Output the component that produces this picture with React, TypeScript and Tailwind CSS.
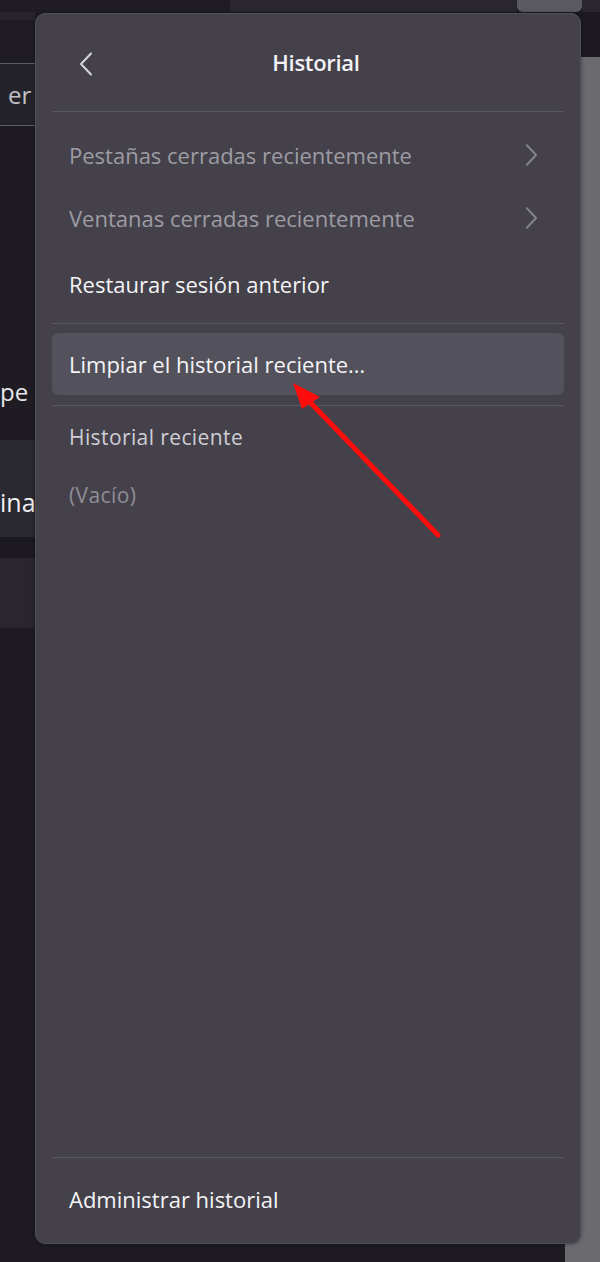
import React from "react";

const font = { fontFamily: '"Open Sans", "Noto Sans", sans-serif' };

function Chevron({ dir, className }: { dir: "left" | "right"; className?: string }) {
  return (
    <svg className={className} viewBox="0 0 14 24" fill="none" stroke="currentColor" strokeWidth="2" strokeLinecap="round" strokeLinejoin="round">
      {dir === "left" ? <path d="M12 1.5 L2 12 L12 22.5" /> : <path d="M2 1.5 L12 12 L2 22.5" />}
    </svg>
  );
}

function Sep() {
  return <div className="h-px bg-[#5a5862]" />;
}

export default function App() {
  return (
    <div className="relative w-[600px] h-[1262px] overflow-hidden bg-[#1e1c22]" style={font}>
      {/* top strip */}
      <div className="flex h-[12px]">
        <div className="w-[230px] bg-[#1f1d23]" />
        <div className="flex-1 bg-[#29272d]" />
        <div className="w-[65px] bg-[#5b5a62] rounded-b-[6px]" />
        <div className="w-[18px] bg-[#29272d]" />
      </div>
      {/* body */}
      <div className="flex h-[1250px]">
        {/* left column */}
        <div className="w-[35px] flex flex-col overflow-hidden">
          <div className="h-[8px] bg-[#27252b]" />
          <div className="h-[43px] bg-[#1f1d23]" />
          <div className="h-px bg-[#5d5c63]" />
          <div className="h-[61px] bg-[#25232a] flex items-center text-[24px] text-[#c3c2c9] pl-[8px] whitespace-nowrap">er</div>
          <div className="h-px bg-[#5d5c63]" />
          <div className="h-[314px] bg-[#1e1c22] flex items-end pb-[36px]">
            <span className="text-[24px] leading-none text-[#e6e6ea] whitespace-nowrap">pe</span>
          </div>
          <div className="h-[97px] bg-[#2b2930] flex items-end pb-[22px] whitespace-nowrap text-[25px] leading-none text-[#f0f0f4]">ina</div>
          <div className="h-[21px] bg-[#1c1a20]" />
          <div className="h-[70px] bg-[#29272d]" />
          <div className="flex-1 bg-[#1e1c22]" />
        </div>
        <div className="flex-1" />
        {/* right column */}
        <div className="w-[35px] flex flex-col">
          <div className="h-[45px] bg-[#1c1a20]" />
          <div className="flex-1 bg-[#6b6a6f]" />
        </div>
      </div>

      {/* popup panel */}
      <div className="absolute left-[35px] top-[13px] w-[546px] h-[1231px] rounded-[10px] bg-[#44414b] border border-[#504e58] flex flex-col px-[16px] shadow-[0_0_4px_rgba(0,0,0,0.4)]">
        <div className="h-[97px] relative flex items-center justify-center pl-[16px]">
          <Chevron dir="left" className="absolute left-[27px] top-[38px] w-[14px] h-[24px] text-[#d6d5db]" />
          <span className="text-[22px] font-semibold text-[#f2f2f5] tracking-[-0.3px]">Historial</span>
        </div>
        <Sep />
        <div className="h-[12px]" />
        <div className="h-[62px] flex items-center justify-between pl-[17px] pr-[26px] text-[22px] text-[#9d9ca3]">
          <span>Pestañas cerradas recientemente</span>
          <Chevron dir="right" className="w-[13px] h-[24px] text-[#85848b]" />
        </div>
        <div className="h-[1px]" />
        <div className="h-[62px] flex items-center justify-between pl-[17px] pr-[26px] text-[22px] text-[#9d9ca3]">
          <span>Ventanas cerradas recientemente</span>
          <Chevron dir="right" className="w-[13px] h-[24px] text-[#85848b]" />
        </div>
        <div className="h-[4px]" />
        <div className="h-[62px] flex items-center pl-[17px] text-[22px] text-[#f4f4f6]">
          <span>Restaurar sesión anterior</span>
        </div>
        <div className="h-[8px]" />
        <Sep />
        <div className="h-[9px]" />
        <div className="h-[62px] flex items-center pl-[17px] rounded-[6px] bg-[#53515c] text-[22px] text-[#f4f4f6]">
          <span>Limpiar el historial reciente…</span>
        </div>
        <div className="h-[10px]" />
        <Sep />
        <div className="h-[5px]" />
        <div className="h-[54px] flex items-center pl-[17px] text-[21px] tracking-[0.4px] text-[#cfced4]">
          <span>Historial reciente</span>
        </div>
        <div className="h-[4px]" />
        <div className="h-[54px] flex items-center pl-[17px] text-[21px] tracking-[0.4px] text-[#8f8d95]">
          <span>(Vacío)</span>
        </div>
        <div className="flex-1" />
        <Sep />
        <div className="h-[82px] flex items-center pl-[17px] text-[22px] text-[#f4f4f6]">
          <span>Administrar historial</span>
        </div>
        <div className="h-[3px]" />
      </div>

      {/* red arrow annotation */}
      <svg className="absolute left-0 top-0 pointer-events-none" width="600" height="1262" viewBox="0 0 600 1262">
        <line x1="438" y1="535" x2="308" y2="400" stroke="#ff0d0d" strokeWidth="5" strokeLinecap="round" />
        <polygon points="293,383 302,409 320,397" fill="#ff0d0d" />
      </svg>
    </div>
  );
}
